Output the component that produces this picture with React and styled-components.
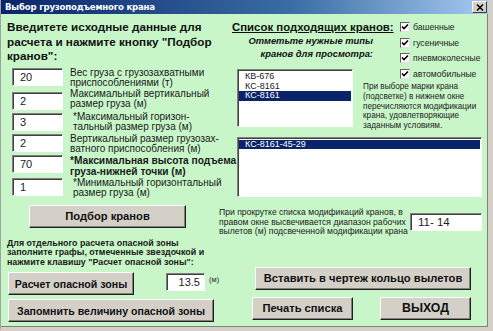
import styled, { createGlobalStyle } from "styled-components";

const GlobalStyle = createGlobalStyle`
  html, body {
    margin: 0;
    padding: 0;
    background: #ffffff;
  }
  body {
    font-family: "Liberation Sans", Arial, sans-serif;
  }
`;

const fields = [
  { value: "20", lines: ["Вес груза с грузозахватными", "приспособлениями (т)"], h: 24 },
  { value: "2", lines: ["Максимальный вертикальный", "размер груза (м)"], h: 21, lt: -3 },
  { value: "3", lines: ["*Максимальный горизон-", "тальный размер груза (м)"], h: 21, lt: -1, indent: 3 },
  { value: "2", lines: ["Вертикальный размер грузозах-", "ватного приспособления (м)"], h: 21 },
  { value: "70", lines: ["*Максимальная высота подъема", "груза-нижней точки (м)"], h: 23, bold: true },
  { value: "1", lines: ["*Минимальный горизонтальный", "размер груза (м)"], h: 21, indent: 3 },
];

const craneTypes = ["башенные", "гусеничные", "пневмоколесные", "автомобильные"];
const cranes = ["КВ-676", "КС-8161", "КС-8161"];

const Window = styled.div`
  width: 493px;
  height: 331px;
  box-sizing: border-box;
  display: flex;
  flex-direction: column;
  border-left: 1px solid #a0a0a0;
  border-right: 5px solid #d4d0c8;
  border-bottom: 4px solid #d4d0c8;
  box-shadow: inset -1px -1px #404040;
  background: #d4d0c8;
`;

const TitleBar = styled.div`
  height: 14px;
  display: flex;
  align-items: center;
  justify-content: space-between;
  padding: 0 0 0 4px;
  background: linear-gradient(to right, #0a246a 0%, #3a6ea5 60%, #a6caf0 100%);
`;

const TitleText = styled.span`
  color: #ffffff;
  font-family: "DejaVu Sans", Verdana, sans-serif;
  font-size: 8.6px;
  font-weight: bold;
  letter-spacing: -0.2px;
`;

const CloseButton = styled.span`
  width: 13px;
  height: 10px;
  margin-right: 1px;
  display: flex;
  align-items: center;
  justify-content: center;
  background: #d4d0c8;
  border: 1px solid;
  border-color: #ffffff #404040 #404040 #ffffff;
`;

const Body = styled.div`
  flex: 1;
  display: flex;
  background: #c8f6c8;
  border-bottom: 1px solid #808080;
  border-right: 1px solid #808080;
`;

const LeftPane = styled.div`
  width: 217px;
  flex-shrink: 0;
  display: flex;
  flex-direction: column;
  padding: 6px 0 0 6px;
  box-sizing: border-box;
`;

const Heading = styled.div`
  font-size: 11.7px;
  font-weight: bold;
  line-height: 14.5px;
  color: #111;
  white-space: nowrap;
`;

const FieldList = styled.div`
  margin-top: 4px;
  display: flex;
  flex-direction: column;
`;

const FieldRow = styled.div`
  height: ${(p) => p.$h}px;
  display: flex;
  align-items: flex-start;
`;

const ValueBox = styled.div`
  width: ${(p) => p.$w || 51}px;
  height: 18px;
  box-sizing: border-box;
  flex-shrink: 0;
  margin-left: ${(p) => p.$ml || 0}px;
  margin-top: ${(p) => p.$mt || 0}px;
  display: flex;
  align-items: center;
  justify-content: ${(p) => (p.$right ? "flex-end" : "flex-start")};
  padding: ${(p) => (p.$right ? "0 4px 0 0" : "0 0 0 7px")};
  background: #ffffff;
  border: 1px solid;
  border-color: #808080 #ffffff #ffffff #808080;
  box-shadow: inset 1px 1px #404040;
  font-size: ${(p) => p.$fs || 11}px;
  color: #222;
`;

const FieldLabel = styled.div`
  margin-left: ${(p) => 7 + (p.$indent || 0)}px;
  margin-top: ${(p) => p.$lt || 0}px;
  font-size: ${(p) => (p.$bold ? 10.2 : 10)}px;
  font-weight: ${(p) => (p.$bold ? "bold" : "normal")};
  line-height: ${(p) => (p.$bold ? 11 : 10.5)}px;
  color: #1a1a1a;
  white-space: nowrap;
`;

const Button = styled.button`
  width: ${(p) => p.$w}px;
  height: 23px;
  margin-left: ${(p) => p.$ml || 0}px;
  margin-top: ${(p) => p.$mt || 0}px;
  flex-shrink: 0;
  padding: 0;
  background: #d4d0c8;
  border: 1px solid;
  border-color: #ffffff #202020 #202020 #ffffff;
  box-shadow: inset -1px -1px #808080;
  font-family: "Liberation Sans", Arial, sans-serif;
  font-size: ${(p) => p.$fs || 11.2}px;
  font-weight: bold;
  color: #111;
  white-space: nowrap;
`;

const Note = styled.div`
  margin-top: 11px;
  font-size: 8.9px;
  font-weight: bold;
  line-height: 9.6px;
  color: #1a1a1a;
  white-space: nowrap;
`;

const ZoneRow = styled.div`
  display: flex;
  align-items: flex-start;
  margin-top: 5px;
`;

const Unit = styled.span`
  margin-left: 4px;
  margin-top: 3px;
  font-size: 7.5px;
  color: #222;
`;

const RightPane = styled.div`
  flex: 1;
  display: flex;
  flex-direction: column;
  padding-top: 4px;
`;

const TopGrid = styled.div`
  display: grid;
  grid-template-columns: 19px 116px 10px 37px 82px 1fr;
  grid-template-rows: 15px 36px 13px auto;
  grid-template-areas:
    "title title title title checks checks"
    "hint hint hint hint checks checks"
    ". list . . checks checks"
    ". list . info info info";
`;

const SectionTitle = styled.div`
  grid-area: title;
  padding: 2px 0 0 14px;
  font-size: 11.4px;
  font-weight: bold;
  text-decoration: underline;
  color: #111;
  white-space: nowrap;
  line-height: 15px;
`;

const Hint = styled.div`
  grid-area: hint;
  padding: 1px 27px 0 0;
  text-align: right;
  font-size: 9.4px;
  font-weight: bold;
  font-style: italic;
  line-height: 13px;
  color: #111;
  white-space: nowrap;
`;

const Checks = styled.div`
  grid-area: checks;
  display: flex;
  flex-direction: column;
  padding-top: 1px;
`;

const CheckRow = styled.label`
  height: 16px;
  display: flex;
  align-items: center;
  font-size: 8.6px;
  color: #222;
`;

const CheckBox = styled.span`
  width: 10px;
  height: 10px;
  box-sizing: border-box;
  margin-right: 3px;
  display: flex;
  align-items: center;
  justify-content: center;
  background: #ffffff;
  border: 1px solid;
  border-color: #606060 #e0e0e0 #e0e0e0 #606060;
`;

const ListBox = styled.div`
  grid-area: ${(p) => p.$area || "auto"};
  width: ${(p) => p.$w}px;
  height: ${(p) => p.$h}px;
  margin-left: ${(p) => p.$ml || 0}px;
  margin-top: ${(p) => p.$mt || 0}px;
  box-sizing: border-box;
  padding: 2px 1px;
  background: #ffffff;
  border: 1px solid;
  border-color: #808080 #ffffff #ffffff #808080;
  box-shadow: inset 1px 1px #404040;
`;

const ListItem = styled.div`
  height: 9.5px;
  line-height: 9.5px;
  padding-left: 6px;
  font-size: 9px;
  background: ${(p) => (p.$selected ? "#0a246a" : "transparent")};
  color: ${(p) => (p.$selected ? "#ffffff" : "#222")};
  white-space: nowrap;
`;

const Info = styled.div`
  grid-area: info;
  font-size: 8.2px;
  line-height: 9.8px;
  color: #222;
  white-space: nowrap;
`;

const ScrollRow = styled.div`
  display: flex;
  align-items: flex-start;
  margin-top: 11px;
`;

const ScrollNote = styled.div`
  width: 191px;
  margin-left: 1px;
  font-size: 8.6px;
  line-height: 9.6px;
  color: #222;
  white-space: nowrap;
`;

const ActionRow = styled.div`
  display: flex;
  margin-top: ${(p) => p.$mt || 0}px;
`;

const CheckMark = () => (
  <svg width="8" height="8" viewBox="0 0 8 8">
    <path d="M1 3.5 L3 5.5 L7 1.5" stroke="#000" strokeWidth="1.6" fill="none" />
  </svg>
);

const CloseIcon = () => (
  <svg width="8" height="7" viewBox="0 0 8 7">
    <path d="M1 0.5 L7 6.5 M7 0.5 L1 6.5" stroke="#000" strokeWidth="1.5" />
  </svg>
);

const App = () => {
  return (
    <>
      <GlobalStyle />
      <Window>
        <TitleBar>
          <TitleText>Выбор грузоподъемного крана</TitleText>
          <CloseButton>
            <CloseIcon />
          </CloseButton>
        </TitleBar>
        <Body>
          <LeftPane>
            <Heading>
              Введитете исходные данные для
              <br />
              расчета и нажмите кнопку "Подбор
              <br />
              кранов":
            </Heading>
            <FieldList>
              {fields.map((f, i) => (
                <FieldRow key={i} $h={f.h}>
                  <ValueBox $ml={5}>{f.value}</ValueBox>
                  <FieldLabel $bold={f.bold} $lt={f.lt} $indent={f.indent}>
                    {f.lines[0]}
                    <br />
                    {f.lines[1]}
                  </FieldLabel>
                </FieldRow>
              ))}
            </FieldList>
            <Button $w={157} $ml={22} $mt={6}>
              Подбор кранов
            </Button>
            <Note>
              Для отдельного расчета опасной зоны
              <br />
              заполните графы, отмеченные звездочкой и
              <br />
              нажмите клавишу "Расчет опасной зоны":
            </Note>
            <ZoneRow>
              <Button $w={126} $ml={1} $fs={10.6}>
                Расчет опасной зоны
              </Button>
              <ValueBox $w={39} $ml={32} $mt={1} $right>
                13.5
              </ValueBox>
              <Unit>(м)</Unit>
            </ZoneRow>
            <Button $w={206} $ml={1} $mt={4} $fs={10.6}>
              Запомнить величину опасной зоны
            </Button>
          </LeftPane>
          <RightPane>
            <TopGrid>
              <SectionTitle>Список подходящих кранов:</SectionTitle>
              <Hint>
                Отметьте нужные типы
                <br />
                кранов для просмотра:
              </Hint>
              <Checks>
                {craneTypes.map((t) => (
                  <CheckRow key={t}>
                    <CheckBox>
                      <CheckMark />
                    </CheckBox>
                    {t}
                  </CheckRow>
                ))}
              </Checks>
              <ListBox $area="list" $w={116} $h={58}>
                {cranes.map((c, i) => (
                  <ListItem key={i} $selected={i === 2}>
                    {c}
                  </ListItem>
                ))}
              </ListBox>
              <Info>
                При выборе марки крана
                <br />
                (подсветке) в нижнем окне
                <br />
                перечисляются модификации
                <br />
                крана, удовлетворяющие
                <br />
                заданным условиям.
              </Info>
            </TopGrid>
            <ListBox $w={245} $h={60} $ml={19} $mt={6}>
              <ListItem $selected>КС-8161-45-29</ListItem>
            </ListBox>
            <ScrollRow>
              <ScrollNote>
                При прокрутке списка модификаций кранов, в
                <br />
                правом окне высвечивается диапазон рабочих
                <br />
                вылетов (м) подсвеченной модификации крана
              </ScrollNote>
              <ValueBox $w={72} $mt={5} $fs={11.5}>
                11- 14
              </ValueBox>
            </ScrollRow>
            <ActionRow $mt={30}>
              <Button $w={216} $ml={37}>
                Вставить в чертеж кольцо вылетов
              </Button>
            </ActionRow>
            <ActionRow $mt={7}>
              <Button $w={101} $ml={34}>
                Печать списка
              </Button>
              <Button $w={91} $ml={27} $fs={12.3}>
                ВЫХОД
              </Button>
            </ActionRow>
          </RightPane>
        </Body>
      </Window>
    </>
  );
};

export default App;
